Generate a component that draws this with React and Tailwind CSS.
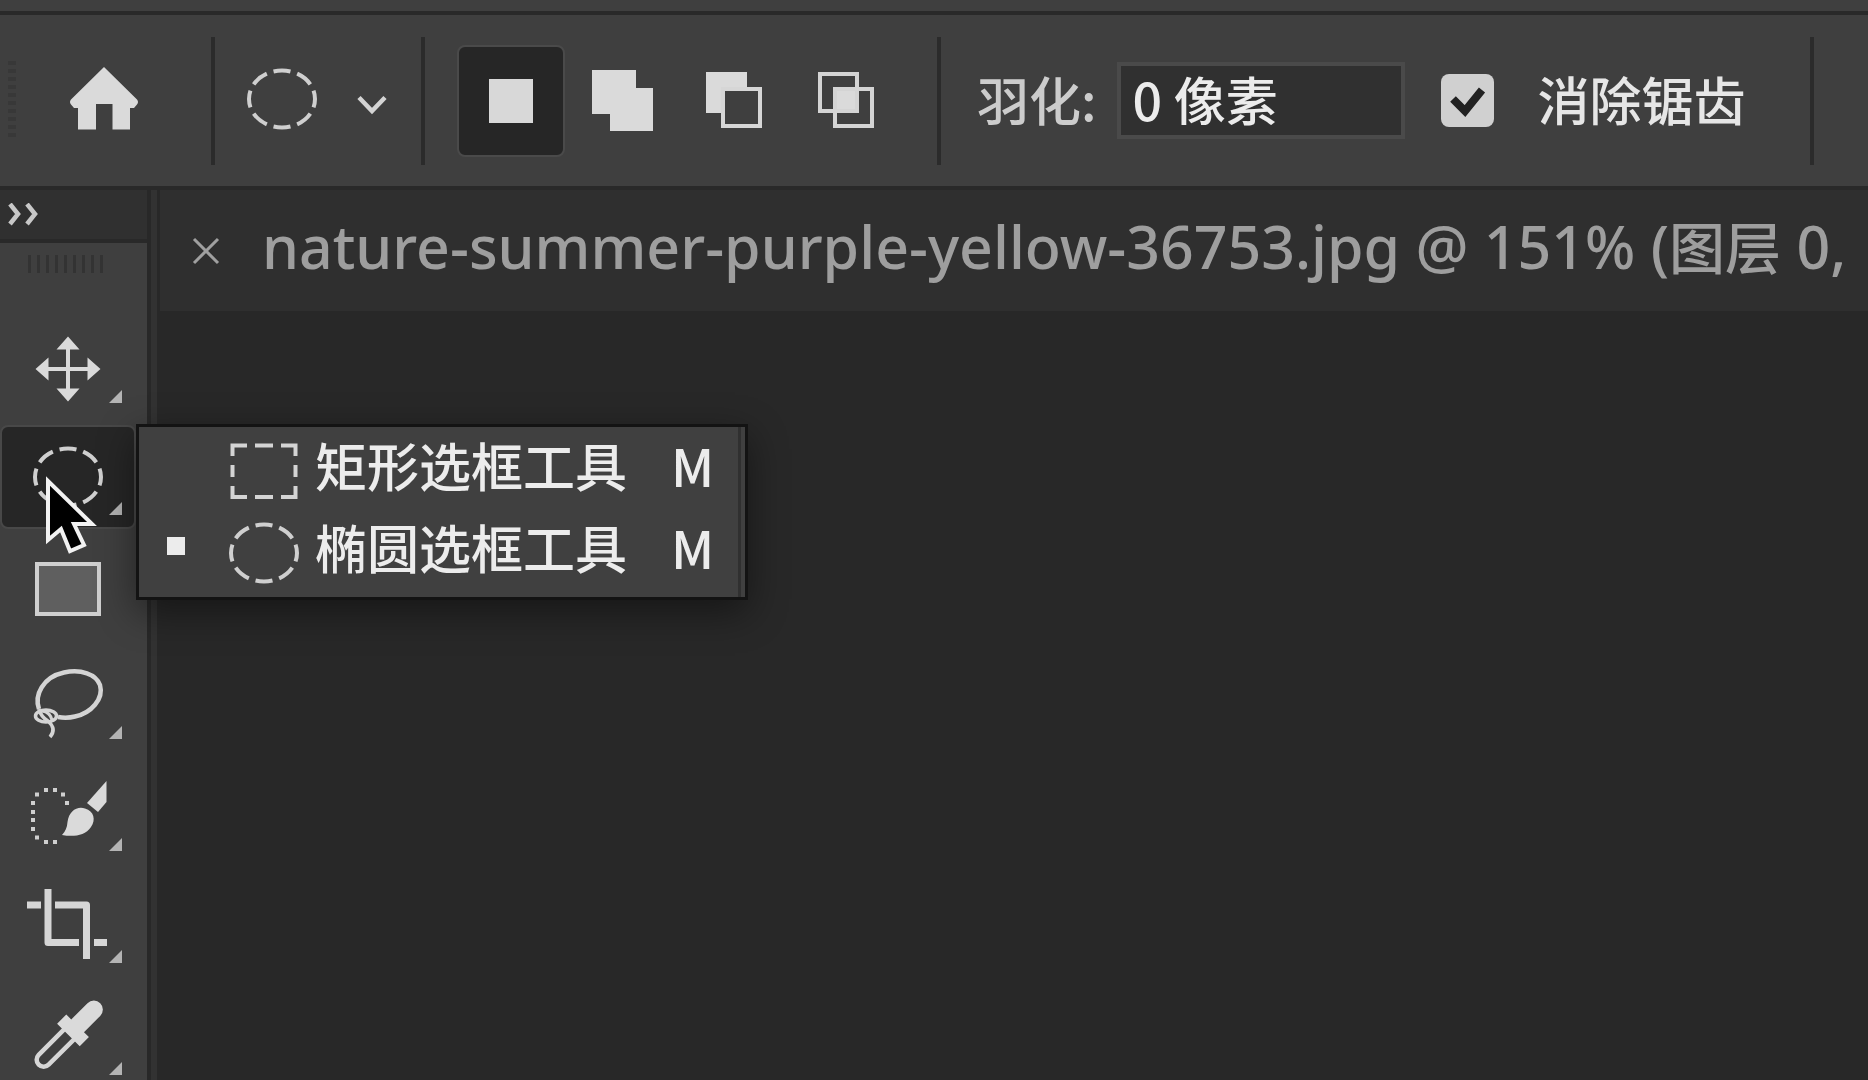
import { useState } from 'react';

const FONT = "font-['Noto_Sans_CJK_SC',sans-serif]";

const EllipseIcon = () => (
  <svg width="70" height="62" viewBox="0 0 70 62" fill="none" stroke="#cfcfcf" strokeWidth="4">
    <ellipse cx="35" cy="31" rx="33" ry="28.5" pathLength="192" strokeDasharray="17 7" strokeDashoffset="8.5" />
  </svg>
);

const RectIcon = () => (
  <svg width="70" height="62" viewBox="0 0 70 62" fill="none" stroke="#d4d4d4" strokeWidth="4">
    <path d="M3.5 16V5.500H18M26 5.500h18M52 5.500H66.500V16M66.500 25v12M66.500 46v11H52M44 57H26M18 57H3.500V46M3.500 37V25" />
  </svg>
);

const HomeIcon = () => (
  <svg width="70" height="64" viewBox="0 0 70 64" fill="#dadada">
    <path d="M35 1 68 33.500Q70 36 68 38.500L65 42H61V63.500H43.500V38H27V63.500H9V42H5L2 38.500Q0 36 2 33.500Z" />
  </svg>
);

const ChevronIcon = () => (
  <svg width="32" height="20" viewBox="0 0 32 20" fill="none" stroke="#d4d4d4" strokeWidth="4.500">
    <path d="M2 2.500 15 16 28 2.500" />
  </svg>
);

const NewIcon = () => (
  <svg width="62" height="62" viewBox="0 0 62 62" fill="#d8d8d8">
    <path d="M9 9h44v44H9z" />
  </svg>
);

const AddIcon = () => (
  <svg width="62" height="62" viewBox="0 0 62 62" fill="#dadada">
    <path d="M0 0H44V18H61V61H18V44H0Z" />
  </svg>
);

const SubtractIcon = () => (
  <svg width="62" height="62" viewBox="0 0 62 62">
    <path d="M2 2H43V17H17V43H2Z" fill="#dadada" />
    <path d="M19 19H56V56H19Z" fill="none" stroke="#d6d6d6" strokeWidth="4" />
  </svg>
);

const IntersectIcon = () => (
  <svg width="62" height="62" viewBox="0 0 62 62" fill="none" stroke="#d4d4d4" strokeWidth="4">
    <path d="M4 4H41V41H4Z" />
    <path d="M19 19H56V56H19Z" />
    <path d="M19 19H41V41H19Z" fill="#dadada" />
  </svg>
);

const MoveIcon = () => (
  <svg width="70" height="70" viewBox="0 -4 70 70" fill="#dadada" overflow="visible">
    <path d="M33 10h4v50h-4zM10 33h50v4H10z" />
    <path d="M35 2.500 46.500 15.500h-23zM35 67.500 46.500 54.500h-23zM2.500 35 15.500 23.500v23zM67.500 35 54.500 23.500v23z" />
  </svg>
);

const RectangleIcon = () => (
  <svg width="70" height="62" viewBox="0 0 70 62">
    <rect x="4" y="6" width="62" height="50" fill="#5f5f5f" stroke="#cfcfcf" strokeWidth="4" />
  </svg>
);

const LassoIcon = () => (
  <svg
    width="70"
    height="70"
    viewBox="0 -2 70 70"
    fill="none"
    stroke="#d4d4d4"
    strokeWidth="4.500"
    overflow="visible"
  >
    <path d="M6 41C1 27 10 9 31 4.500 48 1 63 6 67 17 71 31 58 45 42 48.500Q34 50.500 25 49" />
    <ellipse cx="13" cy="48" rx="10.500" ry="6" strokeWidth="3.500" />
    <path d="M6 41Q8 49 15 53 24 61 17 69" strokeWidth="3.500" />
    <path d="M9 43Q17 44 19 52" strokeWidth="3" />
  </svg>
);

const QuickSelectIcon = () => (
  <svg width="80" height="70" viewBox="0 -5 80 70" fill="#dadada" overflow="visible">
    <path
      d="M3 18h4v4H3zM3 27h4v4H3zM3 35h4v4H3zM3 44h4v4H3zM7 9.500h4v4H7zM7 52.500h4v4H7zM16 5h4v4h-4zM25 5h4v4h-4zM33 9.500h4v4h-4zM37 18h4v4h-4zM16 57h4v4h-4zM25 57h4v4h-4z"
      fill="#cfcfcf"
    />
    <path d="M78.500 -2V19L70 29 59 20Z" />
    <path d="M34 52Q39 47 39.500 39C41 28 49 23 57 25.500 66 28 68 37 63 44 57 53 45 54 34 52Z" />
  </svg>
);

const CropIcon = () => (
  <svg width="82" height="74" viewBox="1 1 82 74" fill="none" stroke="#d6d6d6" strokeWidth="7" overflow="visible">
    <path d="M22 2V55.500H53M29 18H60.500V72" strokeLinejoin="round" />
    <path d="M1 18H15M68 55.500H81" />
  </svg>
);

const EyedropperIcon = () => (
  <svg width="70" height="70" viewBox="1 2 70 70" overflow="visible">
    <g transform="rotate(45 35 35)">
      <path d="M29 32V69a7 7 0 0 0 14 0V32" fill="none" stroke="#d6d6d6" strokeWidth="4.500" />
      <path d="M20 21h7V-2a9 9 0 0 1 18 0V21h7V34H20Z" fill="#dadada" />
    </g>
  </svg>
);

const CloseIcon = () => (
  <svg width="28" height="28" viewBox="0 0 28 28" fill="none" stroke="#a0a0a0" strokeWidth="3">
    <path d="M2 2 26 26M26 2 2 26" />
  </svg>
);

const ExpandIcon = () => (
  <svg width="32" height="24" viewBox="0 0 32 24" fill="none" stroke="#c8c8c8" strokeWidth="4.500">
    <path d="M2 1 10 11 2 21M19 1 27 11 19 21" />
  </svg>
);

const CursorIcon = () => (
  <svg
    className="pointer-events-none absolute left-11 top-12 z-20"
    width="60"
    height="86"
    viewBox="0 0 60 86"
  >
    <path d="M4 8V67L17 56 26 78 40 72 30 51H48Z" fill="#000" stroke="#f2f2f2" strokeWidth="4" />
  </svg>
);

const SELECTION_MODES = [
  { id: 'new', label: '新选区', Icon: NewIcon },
  { id: 'add', label: '添加到选区', Icon: AddIcon },
  { id: 'subtract', label: '从选区减去', Icon: SubtractIcon },
  { id: 'intersect', label: '与选区交叉', Icon: IntersectIcon },
];

const TOOLS = [
  { id: 'move', label: '移动工具', Icon: MoveIcon, more: true },
  { id: 'marquee', label: '椭圆选框工具', Icon: EllipseIcon, more: true },
  { id: 'rectangle', label: '矩形工具', Icon: RectangleIcon },
  { id: 'lasso', label: '套索工具', Icon: LassoIcon, more: true },
  { id: 'quick', label: '快速选择工具', Icon: QuickSelectIcon, more: true },
  { id: 'crop', label: '裁剪工具', Icon: CropIcon, more: true },
  { id: 'eyedropper', label: '吸管工具', Icon: EyedropperIcon, more: true },
];

const MARQUEE_TOOLS = [
  { id: 'rect', label: '矩形选框工具', Icon: RectIcon },
  { id: 'ellipse', label: '椭圆选框工具', Icon: EllipseIcon },
];

const Divider = () => <div className="h-32 w-1 shrink-0 bg-[#2b2b2b]" />;

const OptionsBar = () => {
  const [mode, setMode] = useState('new');
  const [feather, setFeather] = useState('0 像素');
  const [antiAlias, setAntiAlias] = useState(true);

  return (
    <header className="flex h-[179px] shrink-0 items-center overflow-hidden border-y-4 border-[#292929] bg-[#3f3f3f] pl-2">
      <div className="h-20 w-2 shrink-0 bg-[repeating-linear-gradient(#383838_0_4px,#3f3f3f_4px_8px)]" />
      <button type="button" aria-label="主页" className="ml-10 mr-[59px] flex w-24 shrink-0 justify-center pb-1.5">
        <HomeIcon />
      </button>
      <Divider />
      <button type="button" aria-label="工具预设" className="mx-8 flex shrink-0 items-center gap-10 pb-1">
        <EllipseIcon />
        <span className="pt-3">
          <ChevronIcon />
        </span>
      </button>
      <Divider />
      <div className="ml-8 mr-9 flex shrink-0 gap-1">
        {SELECTION_MODES.map(({ id, label, Icon }) => (
          <button
            key={id}
            type="button"
            aria-label={label}
            onClick={() => setMode(id)}
            className={`flex h-28 w-27 items-center justify-center rounded-lg border-2 ${
              mode === id ? 'border-[#4a4a4a] bg-[#262626]' : 'border-transparent'
            }`}
          >
            <Icon />
          </button>
        ))}
      </div>
      <Divider />
      <label htmlFor="feather" className="ml-9 shrink-0 pb-1 text-[#cccccc]">
        羽化:
      </label>
      <input
        id="feather"
        type="text"
        value={feather}
        onChange={(e) => setFeather(e.target.value)}
        className="ml-5 h-[77px] w-72 shrink-0 border-4 border-[#4a4a4a] bg-[#303030] px-3 pb-1 text-[#ececec] outline-none"
      />
      <label className="ml-9 mr-16 flex shrink-0 items-center gap-11 text-[#e6e6e6]">
        <span className="grid">
          <input
            type="checkbox"
            checked={antiAlias}
            onChange={(e) => setAntiAlias(e.target.checked)}
            className="col-start-1 row-start-1 size-[53px] appearance-none rounded-lg bg-[#d0d0d0]"
          />
          {antiAlias && (
            <svg
              className="pointer-events-none col-start-1 row-start-1"
              width="53"
              height="53"
              viewBox="0 0 53 53"
              fill="none"
              stroke="#222"
              strokeWidth="8"
            >
              <path d="M12 25 24 37 41 16" />
            </svg>
          )}
        </span>
        <span className="pb-1">消除锯齿</span>
      </label>
      <Divider />
    </header>
  );
};

const MarqueeMenu = () => {
  const [current, setCurrent] = useState('ellipse');

  return (
    <div
      role="menu"
      className="absolute left-[136px] top-[-1px] z-10 w-max border-3 border-[#131313] bg-[#404040] shadow-[0_12px_36px_rgba(0,0,0,0.45)]"
    >
      <div className="mr-1 border-r-3 border-[#303030] pb-1.5 pr-6">
        {MARQUEE_TOOLS.map(({ id, label, Icon }) => (
          <button
            key={id}
            type="button"
            role="menuitemradio"
            aria-checked={current === id}
            onClick={() => setCurrent(id)}
            className="flex h-[82px] items-center pl-7 text-[#ececec]"
          >
            <span className={`mb-2 mr-11 size-[18px] ${current === id ? 'bg-[#ececec]' : ''}`} />
            <span className="mr-4 pt-1.5">
              <Icon />
            </span>
            <span className="pb-1.5">{label}</span>
            <span className="ml-11 pb-1.5">M</span>
          </button>
        ))}
      </div>
    </div>
  );
};

const Toolbox = () => {
  const [tool, setTool] = useState('marquee');

  return (
    <aside className="flex w-[157px] shrink-0 flex-col border-r-6 border-[#323232]">
      <div className="flex grow flex-col border-r-4 border-[#282828] bg-[#3f3f3f]">
        <div className="flex h-[53px] shrink-0 items-center border-b-4 border-[#292929] bg-[#303030] pl-2">
          <button type="button" aria-label="展开面板">
            <ExpandIcon />
          </button>
        </div>
        <div className="ml-7 mt-3 h-[18px] w-20 shrink-0 bg-[repeating-linear-gradient(90deg,#333_0_3px,#3f3f3f_3px_9px)]" />
        <nav className="mt-10 flex flex-col gap-2">
          {TOOLS.map(({ id, label, Icon, more }) => (
            <div key={id} className="relative h-26 w-34 shrink-0">
              <button
                type="button"
                aria-label={label}
                onClick={() => setTool(id)}
                className={`flex size-full items-center justify-center rounded-lg border-2 ${
                  tool === id ? 'border-[#484848] bg-[#262626]' : 'border-transparent'
                }`}
              >
                <Icon />
              </button>
              {more && (
                <svg className="pointer-events-none absolute bottom-3.5 right-3.5" width="13" height="13" viewBox="0 0 13 13">
                  <path d="M13 0V13H0Z" fill="#b4b4b4" />
                </svg>
              )}
              {id === 'marquee' && <CursorIcon />}
              {id === 'marquee' && <MarqueeMenu />}
            </div>
          ))}
        </nav>
      </div>
    </aside>
  );
};

const DocumentTab = () => (
  <div className="flex h-[121px] shrink-0 items-center overflow-hidden bg-[#2f2f2f] pl-8">
    <button type="button" aria-label="关闭" className="mr-[42px] shrink-0">
      <CloseIcon />
    </button>
    <span className="whitespace-nowrap pb-2 font-['Noto_Sans','Noto_Sans_CJK_SC',sans-serif] text-[59px] text-[#9e9e9e]">
      nature-summer-purple-yellow-36753.jpg @ 151% (<span className="text-[56px]">图层</span> 0,
    </span>
  </div>
);

const App = () => (
  <div className={`flex h-screen flex-col overflow-hidden bg-[#3f3f3f] pt-[11px] text-[52px] leading-none font-medium ${FONT}`}>
    <OptionsBar />
    <div className="flex min-h-0 grow bg-[#282828]">
      <Toolbox />
      <main className="flex min-w-0 grow flex-col border-l-3 border-[#282828]">
        <DocumentTab />
      </main>
    </div>
  </div>
);

export default App;
